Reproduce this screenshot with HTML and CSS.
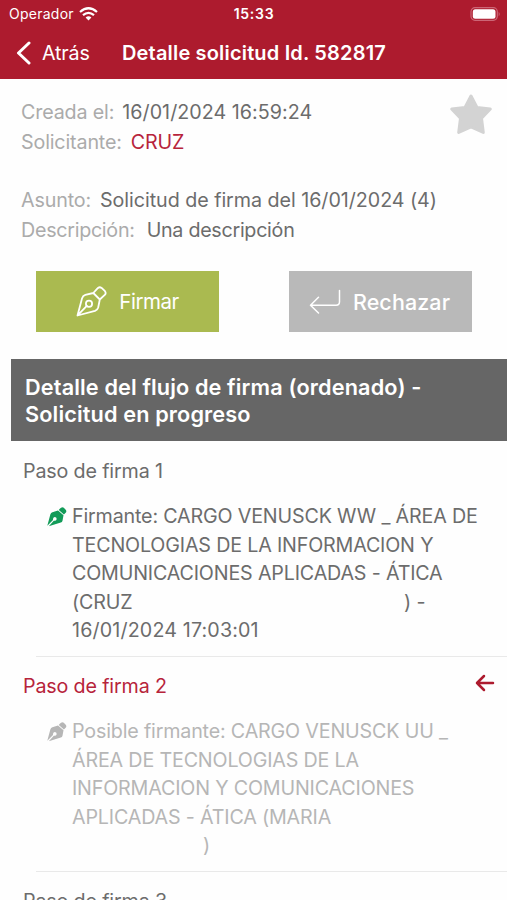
FILE: index.html
```html
<!DOCTYPE html>
<html lang="es">
<head>
<meta charset="utf-8">
<meta name="viewport" content="width=device-width, initial-scale=1">
<title>Detalle solicitud</title>
<link rel="stylesheet" href="styles.css">
</head>
<body>
<svg class="defs" aria-hidden="true">
  <symbol id="nib" viewBox="0 0 20 20">
    <path fill="currentColor" fill-rule="evenodd" d="M12.800 1.800Q14.800-.6 16.800.8L18.700 2.700Q20.100 4.300 18.400 6.100L16.900 7.600 11.800 3.100ZM11 3.400 16.500 8.300 15.500 13.700Q15.200 15.100 13.800 15.600L1.800 19.300 6.800 13.700Q9.400 14 9.700 11.900 9.600 9.900 7.700 9.900 5.700 10.300 6 12.900L.3 18.700 3.400 7.200Q3.900 5.800 5.400 5.200Z"/>
  </symbol>
</svg>
<header class="header">
  <div class="status">
    <div class="carrier"><span>Operador</span>
      <svg width="19" height="14" viewBox="0 0 19 14" fill="none" stroke="#fff" stroke-width="2.200"><path d="M1 5Q9.500-2.500 18 5M4 8.200Q9.500 3.400 15 8.200"/><path d="M9.500 13.500 6.600 10.500Q9.500 8 12.400 10.500Z" fill="#fff" stroke="none"/></svg>
    </div>
    <span class="clock">15:33</span>
    <svg class="battery" width="31" height="14" viewBox="0 0 31 14"><rect x="1" y=".7" width="26.300" height="12.600" rx="4" fill="none" stroke="#cc6676" stroke-width="1.200"/><rect x="2.800" y="2.300" width="22.700" height="9.400" rx="2.500" fill="#fff"/><path d="M28.700 4.700Q30.700 7 28.700 9.300Z" fill="#cc6676"/></svg>
  </div>
  <nav class="nav">
    <a class="back"><svg width="16" height="24" viewBox="0 0 16 24" fill="none" stroke="#fff" stroke-width="3" stroke-linecap="round" stroke-linejoin="round"><path d="M14 2 3.500 12 14 22"/></svg><span>Atrás</span></a>
    <h1>Detalle solicitud Id. 582817</h1>
  </nav>
</header>
<main>
  <section class="summary">
    <div class="fields">
      <p><span class="label">Creada el:</span><span class="date">16/01/2024 16:59:24</span></p>
      <p><span class="label">Solicitante:</span><span class="red">CRUZ</span></p>
      <p class="gap"><span class="label">Asunto:</span><span class="subject">Solicitud de firma del 16/01/2024 (4)</span></p>
      <p class="wide"><span class="label">Descripción:</span><span>Una descripción</span></p>
    </div>
    <svg class="star" width="44" height="43" viewBox="0 0 44 43" fill="#d3d3d3" stroke="#d3d3d3" stroke-width="3" stroke-linejoin="round"><path d="M22 3 28 14.500 41.300 16 32.500 25.300 34.300 39.500 22 34 9.700 39.500 11.500 25.300 2.700 16 16 14.500Z"/></svg>
  </section>
  <div class="actions">
    <button class="btn sign"><svg width="31" height="31" viewBox="0 0 31 31" fill="none" stroke="#fff" stroke-width="1.800" stroke-linejoin="round" stroke-linecap="round"><path d="M1.500 29.500 6 12.500Q6.800 9.500 9.300 8.800L17.300 7 23.800 13.500 22.200 21.500Q21.500 24 19 24.900ZM1.800 29.200 10.800 19.800M17.300 7 22 1.900Q23.800.600 25.600 1.900L29 5.200Q30.300 7 29 8.700L23.800 13.500"/><circle cx="13" cy="17.800" r="3.100"/></svg><span>Firmar</span></button>
    <button class="btn reject"><svg width="32" height="25" viewBox="0 0 32 25" fill="none" stroke="#fff" stroke-width="1.500" stroke-linecap="round" stroke-linejoin="round"><path d="M9.500 8.300 1.500 16.200 9.500 24M1.500 16.200H27Q30.500 16.200 30.500 12.700V1.500"/></svg><span>Rechazar</span></button>
  </div>
  <h2>Detalle del flujo de firma (ordenado) - Solicitud en progreso</h2>
  <section class="step">
    <h3>Paso de firma 1</h3>
    <div class="signer"><svg class="green" width="20" height="20"><use href="#nib"/></svg>
      <p>Firmante: CARGO VENUSCK WW _ ÁREA DE<br>TECNOLOGIAS DE LA INFORMACION Y<br>COMUNICACIONES APLICADAS - ÁTICA<br><span class="redacted owner">(CRUZ</span>) -<br><span class="stamp">16/01/2024 17:03:01</span></p>
    </div>
  </section>
  <section class="step">
    <h3 class="red">Paso de firma 2</h3>
    <svg class="current" width="20" height="18" viewBox="0 0 20 18" fill="none" stroke="#ad1b2e" stroke-width="2.500" stroke-linecap="round" stroke-linejoin="round"><path d="M18 9H2M9 2 2 9 9 16"/></svg>
    <div class="signer pending"><svg width="20" height="20"><use href="#nib"/></svg>
      <p>Posible firmante: CARGO VENUSCK UU _<br>ÁREA DE TECNOLOGIAS DE LA<br>INFORMACION Y COMUNICACIONES<br>APLICADAS - ÁTICA (MARIA<br><span class="redacted surname"></span>)</p>
    </div>
  </section>
  <section class="step last"><h3>Paso de firma 3</h3></section>
</main>
</body>
</html>
```
FILE: styles.css
```css
* { box-sizing: border-box; }
html, body { margin: 0; height: 900px; overflow: hidden; }
body { background: #fefefe; color: #6c6c6c; font: 19.700px/28.500px Inter, sans-serif; letter-spacing: -.15px; }
p, h1, h2, h3 { margin: 0; font-weight: 400; font-size: inherit; }
svg { display: block; flex: none; }
.defs { display: none; }
.header { height: 79px; background: #ad1b2e; color: #fff; }
.status { height: 28px; padding: 0 6px 0 9px; display: grid; grid-template-columns: 1fr auto 1fr; align-items: center; font-size: 14px; line-height: 28px; letter-spacing: .26px; }
.carrier { display: flex; gap: 5px; align-items: center; }
.carrier svg { margin-top: -1px; }
.clock { font-weight: 600; letter-spacing: .7px; position: relative; left: -1px; }
.battery { justify-self: end; margin-top: -1px; }
.nav { height: 49px; display: flex; align-items: center; padding-left: 15px; white-space: nowrap; }
.back { display: flex; align-items: center; gap: 11px; width: 107px; }
.nav h1 { font-weight: 600; font-size: 20px; letter-spacing: .17px; padding-top: 1px; }
.back span { padding-top: 1px; }
.summary { display: flex; justify-content: space-between; padding: 17px 14px 0 21px; height: 192px; }
.fields p { height: 30px; line-height: 32px; display: flex; gap: 9px; white-space: nowrap; }
.fields .gap { margin-top: 28px; }
.fields .wide { gap: 12px; letter-spacing: -.28px; }
.fields .date { letter-spacing: .03px; margin-left: -1px; }
.fields .subject { letter-spacing: -.04px; }
.label { color: #ababab; }
.red { color: #b7243b; }
.star { margin-top: -3px; }
.actions { display: flex; justify-content: space-between; padding: 0 35px 0 36px; height: 88px; }
.btn { height: 61px; width: 183px; border: 0; color: #fff; font: 22px Inter, sans-serif; display: flex; align-items: center; justify-content: center; gap: 12px; padding: 0; }
.sign { background: #aaba50; font-size: 20.500px; letter-spacing: -.5px; }
.reject { background: #b9b9b9; font-size: 21.500px; font-weight: 500; letter-spacing: .1px; padding-right: 2px; }
h2 { margin-left: 11px; height: 82px; padding: 15px 60px 0 14px; background: #666; color: #fff; font-weight: 600; font-size: 21.700px; line-height: 26.500px; width: 496px; letter-spacing: .13px; }
.step { margin-left: 23px; padding-top: 16px; height: 215px; position: relative; white-space: nowrap; }
.step.last { height: 29px; overflow: hidden; }
.step:not(.last)::after { content: ""; position: absolute; left: 13px; right: 0; bottom: -1px; height: 1px; background: #e9e9e9; }
.signer { display: flex; padding: 16px 0 0 24px; gap: 5px; letter-spacing: -.17px; }
.signer p { padding-top: .5px; }
.stamp { letter-spacing: .14px; }
.signer svg { margin-top: 5px; }
.green { color: #129b58; }
.pending { color: #b6b6b6; }
.current { position: absolute; right: 12px; top: 18px; }
.redacted { display: inline-block; }
.owner { width: 332px; }
.surname { width: 131px; }
```
